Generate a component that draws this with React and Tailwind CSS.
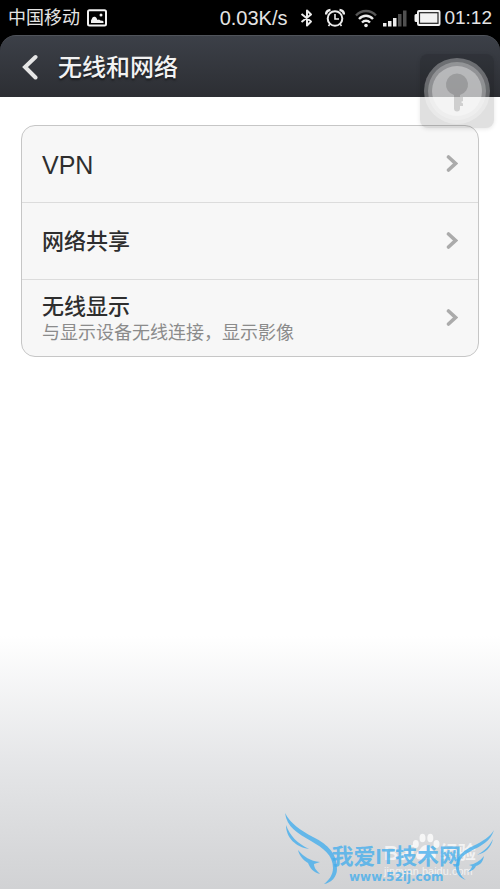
import React from "react";

const items = [
  { id: 1, title: "VPN" },
  { id: 2, title: "网络共享" },
  { id: 3, title: "无线显示", detail: "与显示设备无线连接，显示影像" },
];

const StatusBar = () => (
  <div className="flex h-[35px] items-center bg-black px-2 text-[#e4e4e4]">
    <span className="text-lg leading-5">中国移动</span>
    <svg className="ml-[7px] h-[18px] w-5" viewBox="0 0 20 18" fill="none">
      <rect x="1" y="1.2" width="18" height="15.4" rx="1.5" stroke="#f2f2f2" strokeWidth="2" />
      <path d="M4 14v-2.500l1.500-3c1-1 3-1 4 .5l1 2 1.500-.6 1.500 1 2 .4 1 .7V14z" fill="#f2f2f2" />
      <circle cx="14" cy="6" r="1.500" fill="#f2f2f2" />
    </svg>

    <div className="ml-auto flex items-center">
      <span className="text-xl leading-5">0.03K/s</span>
      {/* bluetooth */}
      <svg className="ml-3 h-5 w-4" viewBox="0 0 16 20" fill="none" stroke="#ececec" strokeWidth="2">
        <path d="M2.500 6l9.500 7.500-4 4V2.500l4 4L2.500 14" strokeLinejoin="round" />
      </svg>
      {/* alarm */}
      <svg className="ml-2.5 h-5 w-5" viewBox="0 0 20 20" fill="none" stroke="#ececec" strokeWidth="2">
        <circle cx="10" cy="10.500" r="7.300" />
        <path d="M10 6v5h4" strokeWidth="1.600" />
        <path d="M1 6.500C1.200 4 3.200 2.200 5.500 2M19 6.500c-.2-2.500-2.200-4.300-4.500-4.500" strokeWidth="2.400" />
        <path d="M4.800 16.200L3.500 18M15.200 16.200l1.300 1.800" strokeWidth="1.600" />
      </svg>
      {/* wifi */}
      <svg className="ml-2.5 h-5 w-[22px]" viewBox="0 0 22 20" fill="none" strokeWidth="2.400">
        <path d="M1 7.500c5.500-6 14.500-6 20 0" stroke="#555" />
        <path d="M4 11c4-4.300 10-4.300 14 0" stroke="#ececec" />
        <path d="M7 14.500c2.300-2.400 5.700-2.400 8 0" stroke="#ececec" />
        <circle cx="11" cy="17.500" r="1.800" fill="#ececec" />
      </svg>
      {/* signal */}
      <svg className="ml-1.5 h-5 w-6" viewBox="0 0 24 20">
        <rect x="0" y="15" width="3.500" height="3.500" fill="#ececec" />
        <rect x="5" y="13" width="3.500" height="5.500" fill="#ececec" />
        <rect x="10" y="10" width="3.500" height="8.500" fill="#ececec" />
        <rect x="15" y="6" width="3.500" height="12.500" fill="#505050" />
        <rect x="20" y="2.500" width="3.500" height="16" fill="#505050" />
      </svg>
      {/* battery */}
      <svg className="ml-[7px] h-4 w-[27px]" viewBox="0 0 27 16">
        <path
          d="M5 0h19.500a2 2 0 0 1 2 2v12a2 2 0 0 1-2 2H5a2 2 0 0 1-2-2V12H2A1.500 1.500 0 0 1 .5 10.500v-5A1.500 1.500 0 0 1 2 4h1V2a2 2 0 0 1 2-2z"
          fill="#f2f2f2"
        />
        <rect x="5.500" y="2.700" width="18.500" height="10.600" fill="#f2f2f2" stroke="#222" strokeWidth="1.200" />
      </svg>
      <span className="ml-[3px] text-[19px] leading-5">01:12</span>
    </div>
  </div>
);

const AssistiveKey = () => (
  <button
    aria-label="Quick key"
    className="absolute top-[54px] right-1.5 z-10 flex size-[74px] items-center justify-center rounded-lg bg-black/12 shadow-[0_1px_4px_rgba(0,0,0,0.1)]"
  >
    <svg className="size-[68px]" viewBox="0 0 68 68">
      <circle cx="34" cy="34" r="33" fill="#fff" fillOpacity="0.300" />
      <circle cx="34" cy="34" r="29" fill="#fff" fillOpacity="0.260" />
      <circle cx="34" cy="34" r="25" fill="#fff" fillOpacity="0.350" />
      <path
        d="M34 16.500a11 11 0 0 1 3 21.600V40h3v4l-2 1 2 1.500V49h-3v2.500a3 3 0 0 1-6 0V38.100a11 11 0 0 1 3-21.600z"
        fill="#000"
        fillOpacity="0.150"
      />
    </svg>
  </button>
);

const Watermark = () => (
  <>
    {/* Baidu mark, underneath the site logo */}
    <div className="absolute right-6 bottom-3 flex w-[92px] flex-col text-white/70">
      <svg className="ml-[28px] h-7 w-7" viewBox="0 0 28 28" fill="#fff" fillOpacity="0.750">
        <ellipse cx="3.800" cy="11" rx="3" ry="4" />
        <ellipse cx="10.500" cy="5" rx="3" ry="4.300" />
        <ellipse cx="18.300" cy="5" rx="3" ry="4.300" />
        <ellipse cx="24.500" cy="11" rx="3" ry="4" />
        <path d="M14 12c4 0 5 4 8 6.500 3 2.800 2.500 8-2 8-3 0-4-.8-6-.8s-3 .8-6 .8c-4.500 0-5-5.200-2-8C9 16 10 12 14 12z" />
      </svg>
      <div className="-mt-5 flex justify-between">
        <b className="text-xl leading-6">Bai</b>
        <b className="text-lg leading-6">经验</b>
      </div>
      <span className="text-[11px] leading-3">jingyan.baidu.com</span>
    </div>

    <div className="absolute right-1.5 bottom-1 flex items-end text-[#45aeec]/80">
      <svg className="-mr-2 h-[72px] w-[54px]" viewBox="0 0 54 72" fill="currentColor">
        <path d="M0 0C6 11 15 17 28 24c16 8 24 17 24 32 0 8-6 14-13 15 5-4 9-9 9-16C48 42 38 35 26 28 12 20 2 14 0 0z" />
        <path d="M1 12c4 11 11 18 23 24C11 34 1 25 1 12z" />
        <path d="M13 37c6 7 12 11 22 12l-6 2c0 4 3 7 6 10-7-2-10-6-12-11-5-3-9-8-10-13z" />
      </svg>
      <div className="flex flex-col items-center">
        <b className="text-[22px] leading-6 whitespace-nowrap">我爱IT技术网</b>
        <b className="font-['DejaVu_Sans'] text-xs leading-4">www.52ij.com</b>
      </div>
      <svg className="-ml-1.5 mb-1 h-[51px] w-[39px]" viewBox="0 0 39 51" fill="currentColor">
        <path d="M39 0C36 11 26 16 16 21 6 26 3 31 4 39c1 6 4 9 7 11C4 48 0 42 1 34 2 25 10 20 18 16 28 11 35 7 39 0z" />
        <path d="M38 9c-2 9-8 14-16 16 7-4 12-8 16-16z" />
        <path d="M29 26c-1 6-4 9-8 10-1 3-4 5-8 6 2-2 4-4 4-6l-3-1c6-1 11-4 15-9z" />
      </svg>
    </div>
  </>
);

const App = () => {
  return (
    <div className="relative flex min-h-screen flex-col overflow-hidden bg-black font-['Liberation_Sans','Noto_Sans_CJK_SC',sans-serif]">
      <StatusBar />
      <header className="flex h-[62px] items-center rounded-t-2xl border-t border-[#50545b] bg-linear-to-b from-[#3c4048] to-[#2c2e33] pl-[22px]">
        <button aria-label="返回">
          <svg className="h-[26px] w-4" viewBox="0 0 16 26" fill="none">
            <path d="M13.500 3L3 13l10.500 10.500" stroke="#e6e6e6" strokeWidth="4" strokeLinecap="round" />
          </svg>
        </button>
        <h1 className="ml-5 pt-0.5 text-2xl leading-8 font-medium text-[#f2f2f2] [text-shadow:0_2px_2px_rgba(0,0,0,0.5)]">
          无线和网络
        </h1>
      </header>

      <main className="flex-1 bg-linear-to-b from-white from-68% via-[#e5e6e8] via-84% to-[#d1d2d4] px-[21px] pt-7">
        <ul className="divide-y divide-[#dcdcdc] rounded-[14px] border border-[#c6c6c6] bg-[#f7f7f7]">
          {items.map((item) => (
            <li key={item.id}>
              <button className="flex h-[76px] w-full items-center justify-between px-5 text-left">
                <span className="flex flex-col pt-0.5">
                  <span
                    className={
                      item.title === "VPN"
                        ? "text-[25px] leading-7 text-[#2e2e2e]"
                        : "text-[22px] leading-7 font-medium text-[#2e2e2e]"
                    }
                  >
                    {item.title}
                  </span>
                  {item.detail && (
                    <span className="text-lg leading-6 text-[#8b8b8b]">{item.detail}</span>
                  )}
                </span>
                <svg className="h-[18px] w-3" viewBox="0 0 12 18" fill="none">
                  <path d="M2.500 2L9.500 8.500 2.500 15" stroke="#ababab" strokeWidth="3.600" strokeLinecap="round" />
                </svg>
              </button>
            </li>
          ))}
        </ul>
      </main>

      <AssistiveKey />
      <Watermark />
    </div>
  );
};

export default App;
